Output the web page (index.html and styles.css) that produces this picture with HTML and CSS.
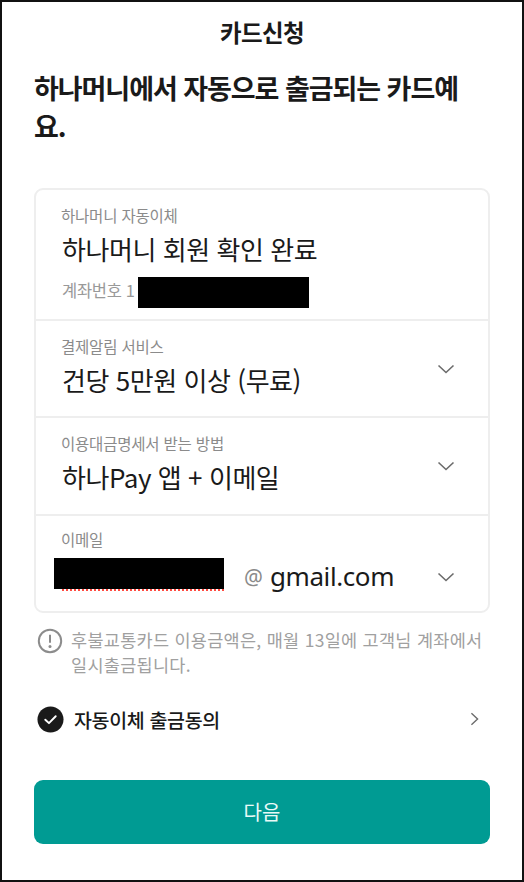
FILE: index.html
```html
<!DOCTYPE html>
<html lang="ko">
<head>
<meta charset="utf-8">
<title>카드신청</title>
<link rel="stylesheet" href="styles.css">
</head>
<body>
<main class="frame">
  <header class="top">카드신청</header>
  <h1 class="headline">하나머니에서 자동으로 출금되는 카드예<br>요.</h1>
  <section class="card">
    <div class="row row-first">
      <div class="label">하나머니 자동이체</div>
      <div class="value">하나머니 회원 확인 완료</div>
      <div class="acct"><span class="acct-text">계좌번호 1</span><span class="mask mask-acct"></span></div>
    </div>
    <div class="row row-select">
      <div class="label">결제알림 서비스</div>
      <div class="value">건당 5만원 이상 (무료)</div>
      <svg class="chev" viewBox="0 0 18 10"><path d="M1.5 1.500 9 8.500l7.500-7"/></svg>
    </div>
    <div class="row row-select">
      <div class="label">이용대금명세서 받는 방법</div>
      <div class="value">하나Pay 앱 + 이메일</div>
      <svg class="chev" viewBox="0 0 18 10"><path d="M1.5 1.500 9 8.500l7.500-7"/></svg>
    </div>
    <div class="row row-mail">
      <div class="label">이메일</div>
      <div class="mail">
        <div class="mail-id"><span class="mask mask-mail"></span><span class="dots"></span></div>
        <span class="at">@</span>
        <span class="domain">gmail.com</span>
      </div>
      <svg class="chev" viewBox="0 0 18 10"><path d="M1.5 1.500 9 8.500l7.500-7"/></svg>
    </div>
  </section>
  <div class="notice">
    <svg class="info" viewBox="0 0 26 26"><circle cx="13" cy="13" r="11.2"/><path d="M13 6.800v8"/><circle class="dot" cx="13" cy="18.600" r="1.500"/></svg>
    <p>후불교통카드 이용금액은, 매월 13일에 고객님 계좌에서<br>일시출금됩니다.</p>
  </div>
  <div class="agree">
    <svg class="check" viewBox="0 0 28 28"><circle cx="14" cy="14" r="13.500"/><path d="M8.600 14.200l3.800 3.600 7-7.200"/></svg>
    <span class="agree-text">자동이체 출금동의</span>
    <svg class="arrow" viewBox="0 0 10 16"><path d="M1.500 1.500 8.500 8l-7 6.500"/></svg>
  </div>
  <button class="next" type="button">다음</button>
</main>
</body>
</html>
```
FILE: styles.css
```css
* { box-sizing: border-box; }
html, body { margin: 0; padding: 0; background: #fff; }
body { width: 524px; height: 882px; overflow: hidden; font-family: "Noto Sans CJK KR", "Noto Sans", sans-serif; color: #1a1a1a; }
.frame { width: 524px; height: 882px; border: 2px solid #111; padding: 0 32px; display: flex; flex-direction: column; }
.top { margin-top: 12px; height: 36px; line-height: 36px; text-align: center; font-size: 23.5px; font-weight: 700; letter-spacing: -0.6px; }
.headline { margin: 19px 0 0; height: 89px; font-size: 27px; line-height: 38px; font-weight: 700; letter-spacing: -1.05px; color: #1a1a1a; white-space: nowrap; }
.card { margin-top: 30px; height: 425px; border: 2px solid #eeeeee; border-radius: 9px; display: flex; flex-direction: column; }
.row { position: relative; padding: 0 0 0 25px; border-bottom: 2px solid #eeeeee; }
.row-first { height: 131px; padding-top: 14px; }
.row-select { height: 97px; padding-top: 14px; }
.row-select + .row-select { height: 98px; }
.row-mail { flex: 1; padding-top: 12px; border-bottom: 0; }
.label { font-size: 15.5px; line-height: 22px; color: #8b8b8b; letter-spacing: -0.2px; }
.value { margin-top: 5px; font-size: 26px; line-height: 36px; color: #1a1a1a; letter-spacing: -0.45px; padding-left: 1px; }
.acct { margin-top: 10px; height: 31px; display: flex; align-items: flex-start; font-size: 16.5px; color: #999; letter-spacing: -0.3px; padding-left: 1px; }
.acct-text { line-height: 26px; }
.mask { display: block; background: #000; height: 31px; }
.mask-acct { width: 171px; margin-left: 3px; flex: none; }
.chev { position: absolute; right: 33px; top: 43px; width: 18px; height: 10px; fill: none; stroke: #6b6b6b; stroke-width: 1.6; }
.row-mail .chev { top: 56px; }
.mail { display: flex; align-items: center; height: 33px; margin-top: 8px; margin-left: -7px; }
.mail-id { position: relative; width: 170px; height: 33px; flex: none; }
.dots { position: absolute; left: 8px; right: 0; top: 31px; height: 2px; background: repeating-linear-gradient(90deg, #ff4a40 0 2px, transparent 2px 4px); }
.at { margin-left: 20px; margin-top: 4px; font-size: 21px; color: #8a8a8a; font-family: "Noto Sans", sans-serif; }
.domain { margin-left: 7px; margin-top: 2px; font-size: 26px; line-height: 36px; font-family: "Noto Sans", sans-serif; color: #1a1a1a; letter-spacing: -0.4px; }
.notice { margin-top: 14px; display: flex; align-items: flex-start; gap: 8px; padding-left: 3px; }
.info { width: 26px; height: 26px; flex: none; margin-top: 1px; fill: none; stroke: #8c8c8c; stroke-width: 2; }
.info .dot { fill: #8c8c8c; stroke: none; }
.notice p { margin: 0; font-size: 17.5px; line-height: 25px; color: #a0a0a0; letter-spacing: 0.28px; white-space: nowrap; }
.agree { margin-top: 28px; height: 28px; display: flex; align-items: center; padding-left: 3px; }
.check { width: 27px; height: 27px; flex: none; }
.check circle { fill: #1a1a1a; }
.check path { fill: none; stroke: #fff; stroke-width: 2; stroke-linecap: round; stroke-linejoin: round; }
.agree-text { margin-left: 10px; font-size: 19.5px; font-weight: 500; letter-spacing: -0.35px; }
.arrow { margin-left: auto; margin-right: 11px; width: 9px; height: 14px; fill: none; stroke: #6b6b6b; stroke-width: 1.6; }
.next { margin-top: 47px; padding-bottom: 2px; width: 456px; height: 64px; border: 0; border-radius: 9px; background: #009b93; color: #eafaf8; font-family: inherit; font-size: 20px; font-weight: 400; }
```
